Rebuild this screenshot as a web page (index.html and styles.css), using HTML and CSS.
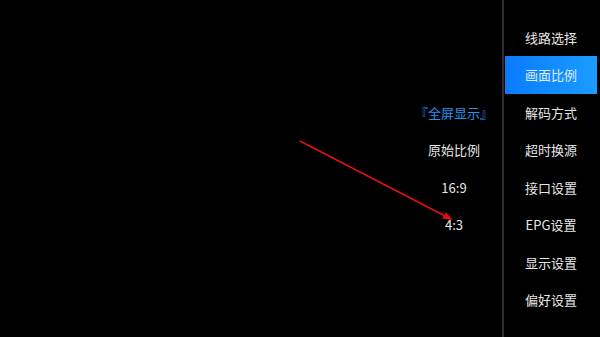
FILE: index.html
```html
<!DOCTYPE html>
<html lang="zh">
<head>
    <meta charset="UTF-8">
    <title>设置</title>
    <link rel="stylesheet" href="styles.css">
</head>
<body>
    <div class="screen">
        <div class="sub-pane">
            <ul class="sub-list">
                <li class="sub-item active">『全屏显示』</li>
                <li class="sub-item">原始比例</li>
                <li class="sub-item">16:9</li>
                <li class="sub-item">4:3</li>
            </ul>
        </div>
        <div class="divider"></div>
        <ul class="menu">
            <li class="menu-item">线路选择</li>
            <li class="menu-item selected">画面比例</li>
            <li class="menu-item">解码方式</li>
            <li class="menu-item">超时换源</li>
            <li class="menu-item">接口设置</li>
            <li class="menu-item">EPG设置</li>
            <li class="menu-item">显示设置</li>
            <li class="menu-item">偏好设置</li>
        </ul>

        <!-- annotation arrow -->
        <svg class="arrow" width="600" height="337" viewBox="0 0 600 337">
            <line x1="300" y1="141" x2="445" y2="216" stroke="#e01010" stroke-width="1.6"/>
            <polygon points="453,220 442.3,218.6 445.9,212.2" fill="#e01010"/>
        </svg>
    </div>
</body>
</html>
```

FILE: styles.css
```css
* {
    margin: 0;
    padding: 0;
    box-sizing: border-box;
}

html, body {
    width: 600px;
    height: 337px;
    background: #000;
    overflow: hidden;
}

body {
    font-family: "Noto Sans CJK SC", "Noto Sans", sans-serif;
    font-size: 13px;
    color: #e6e6e6;
}

ul {
    list-style: none;
}

.screen {
    position: relative;
    display: flex;
    width: 600px;
    height: 337px;
}

.sub-pane {
    flex: 1;
    display: flex;
    justify-content: flex-end;
}

.sub-list {
    width: 96px;
    padding-top: 93.75px;
}

.sub-item {
    height: 37.5px;
    line-height: 37.5px;
    text-align: center;
    white-space: nowrap;
}

.sub-item.active {
    color: #2196f3;
}

.divider {
    width: 2px;
    background: #2e2e2e;
}

.menu {
    width: 96px;
    padding: 18.75px 3px 0 1px;
}

.menu-item {
    height: 37.5px;
    line-height: 37.5px;
    text-align: center;
    white-space: nowrap;
}

.menu-item.selected {
    background: linear-gradient(90deg, #0a7bff 0%, #1b9cff 100%);
    color: #dfeeff;
}

.arrow {
    position: absolute;
    left: 0;
    top: 0;
    pointer-events: none;
}
```
